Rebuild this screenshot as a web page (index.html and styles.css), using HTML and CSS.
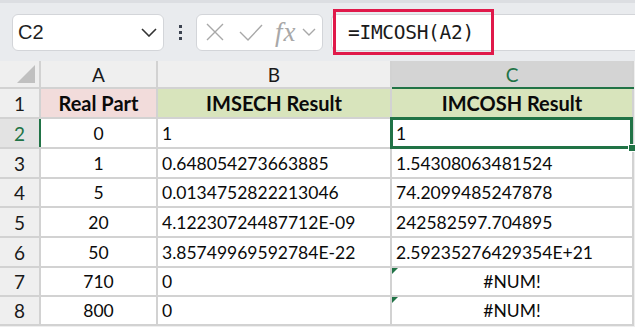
FILE: index.html
```html
<!DOCTYPE html>
<html lang="en">
<head>
    <meta charset="UTF-8">
    <meta name="viewport" content="width=device-width, initial-scale=1.0">
    <title>IMCOSH</title>
    <link rel="stylesheet" href="styles.css">
</head>
<body>
    <div class="toolbar">
        <div class="namebox">
            <span class="cell-name">C2</span>
            <svg class="chev" width="16" height="9" viewBox="0 0 16 9"><path d="M1 1 L8 8 L15 1" fill="none" stroke="#333" stroke-width="1.6"/></svg>
        </div>
        <div class="dots"><span></span><span></span><span></span></div>
        <div class="fxbox">
            <svg width="18" height="18" viewBox="0 0 18 18"><path d="M1 1 L17 17 M17 1 L1 17" stroke="#a8a8a8" stroke-width="1.4" fill="none"/></svg>
            <svg width="24" height="17" viewBox="0 0 24 17"><path d="M1 8 L9 16 L23 1" stroke="#a8a8a8" stroke-width="1.4" fill="none"/></svg>
            <span class="fx">fx</span>
            <svg width="14" height="8" viewBox="0 0 14 8"><path d="M1 1 L7 7 L13 1" fill="none" stroke="#a8a8a8" stroke-width="1.4"/></svg>
        </div>
        <div class="formula">
            <span class="formula-text">=IMCOSH(A2)</span>
        </div>
    </div>
    <table class="sheet">
        <colgroup>
            <col class="col-row"><col class="col-a"><col class="col-b"><col class="col-c">
        </colgroup>
        <tr class="head-row">
            <th class="corner"><span class="tri"></span></th>
            <th>A</th>
            <th>B</th>
            <th class="head-active">C</th>
        </tr>
        <tr>
            <th>1</th>
            <td class="title pink">Real Part</td>
            <td class="title green">IMSECH Result</td>
            <td class="title green">IMCOSH Result</td>
        </tr>
        <tr>
            <th class="row-active">2</th>
            <td class="num">0</td>
            <td>1</td>
            <td class="selected">1<span class="sel-box"></span><span class="handle"></span></td>
        </tr>
        <tr>
            <th>3</th>
            <td class="num">1</td>
            <td>0.648054273663885</td>
            <td>1.54308063481524</td>
        </tr>
        <tr class="short">
            <th>4</th>
            <td class="num">5</td>
            <td>0.0134752822213046</td>
            <td>74.2099485247878</td>
        </tr>
        <tr>
            <th>5</th>
            <td class="num">20</td>
            <td>4.12230724487712E-09</td>
            <td>242582597.704895</td>
        </tr>
        <tr>
            <th>6</th>
            <td class="num">50</td>
            <td>3.85749969592784E-22</td>
            <td>2.59235276429354E+21</td>
        </tr>
        <tr class="short">
            <th>7</th>
            <td class="num">710</td>
            <td>0</td>
            <td class="num err"><span class="flag"></span>#NUM!</td>
        </tr>
        <tr class="short">
            <th>8</th>
            <td class="num">800</td>
            <td>0</td>
            <td class="num err"><span class="flag"></span>#NUM!</td>
        </tr>
    </table>
</body>
</html>
```

FILE: styles.css
```css
*{
    margin: 0px;
    padding: 0px;
    box-sizing: border-box;
}
body{
    background-color: #eeeeee;
    width: 635px;
    height: 327px;
    overflow: hidden;
}
.toolbar{
    display: flex;
    align-items: center;
    height: 61px;
    padding-left: 12px;
    background-color: #e9ebee;
    border-top: 3px solid #dcdee2;
}
.namebox{
    display: flex;
    align-items: center;
    justify-content: space-between;
    width: 152px;
    height: 37px;
    padding: 0px 6px 0px 5px;
    background-color: white;
    border: 1px solid #d3d5d9;
    border-radius: 6px;
}
.cell-name{
    font-family: "Liberation Sans", Arial, sans-serif;
    font-size: 20px;
    color: #1f1f1f;
}
.dots{
    display: flex;
    flex-direction: column;
    gap: 3px;
    margin: 0px 14px 0px 15px;
}
.dots span{
    width: 3px;
    height: 3px;
    background-color: #3c4350;
}
.fxbox{
    display: flex;
    align-items: center;
    width: 127px;
    height: 37px;
    padding-left: 9px;
    background-color: white;
    border: 1px solid #d3d5d9;
    border-radius: 6px;
}
.fxbox svg:nth-child(2){
    margin-left: 15px;
}
.fx{
    margin-left: 12px;
    font-family: "Liberation Serif", "Times New Roman", serif;
    font-style: italic;
    font-size: 27px;
    line-height: 1;
    color: #a8a8a8;
    letter-spacing: 1px;
}
.fxbox svg:last-child{
    margin-left: 5px;
}
.formula{
    display: flex;
    align-items: center;
    flex: 1;
    height: 37px;
    margin-left: 8px;
    background-color: white;
    border: 1px solid #d3d5d9;
    border-right: none;
    border-radius: 6px 0px 0px 6px;
}
.formula-text{
    display: flex;
    align-items: center;
    width: 161px;
    height: 46px;
    margin-left: 1px;
    padding-left: 12px;
    border: 3px solid #e0194a;
    font-family: "DejaVu Sans Mono", "Liberation Mono", monospace;
    font-size: 19.5px;
    letter-spacing: -0.3px;
    color: #1a1a1a;
}
.sheet{
    table-layout: fixed;
    border-collapse: collapse;
    width: 633px;
    background-color: white;
    font-family: Lato, "Open Sans", sans-serif;
    font-size: 17.5px;
    color: #0a0a0a;
}
.col-row{ width: 40px; }
.col-a{ width: 117px; }
.col-b{ width: 234px; }
.col-c{ width: 242px; }
.sheet th, .sheet td{
    border: 2px solid #d2d2d2;
    height: 30px;
    white-space: nowrap;
    overflow: visible;
}
.sheet tr.short th, .sheet tr.short td{
    height: 29px;
}
.sheet th{
    background-color: #efefef;
    font-weight: normal;
    font-size: 19px;
    color: #1a1a1a;
}
.head-row th{
    height: 27px;
    border-top: none;
}
.sheet tr th:first-child{
    border-left: none;
}
.corner{
    position: relative;
}
.tri{
    position: absolute;
    right: 4px;
    bottom: 4px;
    width: 0px;
    height: 0px;
    border-left: 18px solid transparent;
    border-bottom: 18px solid #c0c0c0;
}
.head-active{
    background-color: #d4d4d4 !important;
    color: #217346 !important;
    border-bottom: 2px solid #217346 !important;
}
.row-active{
    color: #217346 !important;
    border-right: 2px solid #217346 !important;
    background-color: #e3e3e3 !important;
}
.sheet td{
    padding-left: 4px;
}
.num{
    text-align: center;
    padding-left: 0px !important;
}
.title{
    text-align: center;
    font-weight: bold;
    font-size: 20px;
    padding-left: 0px !important;
}
.pink{
    background-color: #f2dcdb;
}
.green{
    background-color: #d8e4bc;
}
.selected{
    position: relative;
}
.sel-box{
    position: absolute;
    left: -2px;
    top: -2px;
    right: -1px;
    bottom: -2px;
    border: 3px solid #217346;
}
.handle{
    position: absolute;
    right: -4px;
    bottom: -5px;
    width: 8px;
    height: 8px;
    background-color: #217346;
    border: 1px solid white;
}
.err{
    position: relative;
}
.flag{
    position: absolute;
    left: 0px;
    top: 0px;
    width: 0px;
    height: 0px;
    border-top: 6px solid #217346;
    border-right: 6px solid transparent;
}
```
